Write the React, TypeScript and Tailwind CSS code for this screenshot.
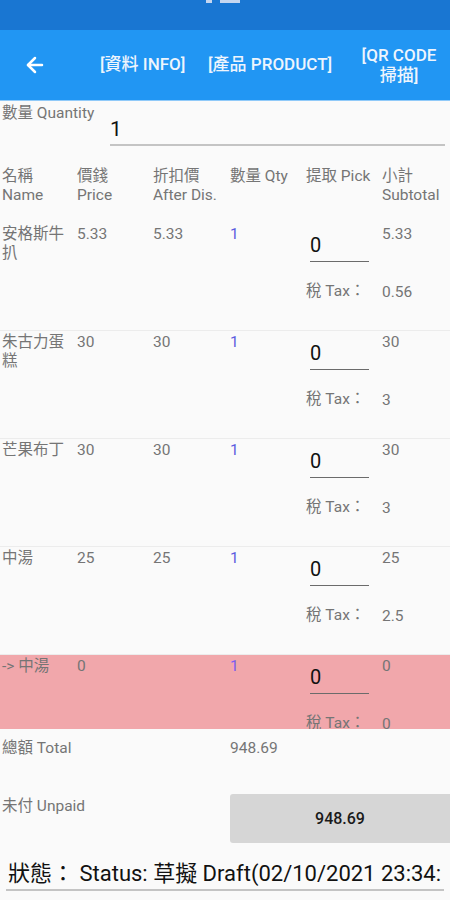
import { ArrowLeft } from 'lucide-react';

const font = { fontFamily: 'Roboto, "Noto Sans CJK TC", sans-serif' };

type Item = {
  name: string;
  price: string;
  after: string;
  qty: string;
  subtotal: string;
  tax: string;
  highlight?: boolean;
};

const items: Item[] = [
  { name: '安格斯牛扒', price: '5.33', after: '5.33', qty: '1', subtotal: '5.33', tax: '0.56' },
  { name: '朱古力蛋糕', price: '30', after: '30', qty: '1', subtotal: '30', tax: '3' },
  { name: '芒果布丁', price: '30', after: '30', qty: '1', subtotal: '30', tax: '3' },
  { name: '中湯', price: '25', after: '25', qty: '1', subtotal: '25', tax: '2.5' },
  { name: '-> 中湯', price: '0', after: '', qty: '1', subtotal: '0', tax: '0', highlight: true },
];

const cols = 'grid grid-cols-[75px_76px_77px_76px_76px_1fr] pl-[2px]';

function ItemRow({ item }: { item: Item }) {
  return (
    <div
      className={`${cols} h-[108px] shrink-0 border-b border-[#ececec] pt-[2px] text-[15.5px] leading-[19px] text-[#757575] ${
        item.highlight ? 'bg-[#f1a7ab]' : ''
      }`}
    >
      <div className="pr-[2px]">{item.name}</div>
      <div>{item.price}</div>
      <div>{item.after}</div>
      <div className={item.highlight ? 'text-[#7c5cf0]' : 'text-[#5c5ce0]'}>{item.qty}</div>
      <div className="flex flex-col">
        <div className="ml-[4px] mt-[7px] w-[59px] border-b-[1.5px] border-[#6b6b6b] pb-[3px] text-[20px] leading-[26px] text-[#111]">
          0
        </div>
        <div className="mt-[20px] whitespace-nowrap text-[#757575]">稅 Tax：</div>
      </div>
      <div className="flex flex-col">
        <div>{item.subtotal}</div>
        <div className="mt-[39px]">{item.tax}</div>
      </div>
    </div>
  );
}

export default function App() {
  return (
    <div className="flex h-[900px] w-[450px] flex-col overflow-hidden bg-[#fafafa]" style={font}>
      {/* Status bar */}
      <div className="relative h-[30px] shrink-0 bg-[#1976d2]">
        <div className="absolute left-[206px] top-0 h-[3px] w-[6px] bg-[#c5d6f0]" />
        <div className="absolute left-[220px] top-0 h-[3px] w-[20px] bg-[#c5d6f0]" />
      </div>

      {/* App bar */}
      <div className="flex h-[70px] shrink-0 items-center bg-[#2196f3] text-[17px] font-medium text-[#eef5fd]">
        <div className="flex w-[100px] pl-[23px]">
          <ArrowLeft size={24} strokeWidth={2.5} color="#ffffff" />
        </div>
        <div className="w-[108px] whitespace-nowrap">[資料 INFO]</div>
        <div className="w-[152px] whitespace-nowrap">[產品 PRODUCT]</div>
        <div className="w-[78px] whitespace-nowrap text-center leading-[20px]">
          [QR CODE
          <br />
          掃描]
        </div>
      </div>
      <div className="h-px shrink-0 bg-[#90caf9]" />

      {/* Quantity */}
      <div className="flex shrink-0 pl-[2px] pt-[3px]">
        <div className="w-[108px] whitespace-nowrap text-[15.5px] leading-[19px] text-[#757575]">數量 Quantity</div>
        <div className="mr-[5px] mt-[12px] flex-1 border-b-2 border-[#c4c4c4] pb-[2px] text-[21px] leading-[26px] text-[#111]">
          1
        </div>
      </div>

      {/* Header */}
      <div className={`${cols} mt-[21px] h-[56px] shrink-0 text-[15.5px] leading-[19px] text-[#757575]`}>
        <div>名稱<br />Name</div>
        <div>價錢<br />Price</div>
        <div className="whitespace-nowrap">折扣價<br />After Dis.</div>
        <div className="whitespace-nowrap">數量 Qty</div>
        <div className="whitespace-nowrap">提取 Pick</div>
        <div>小計<br />Subtotal</div>
      </div>

      {/* Items list */}
      <div className="flex h-[506px] shrink-0 flex-col overflow-hidden">
        {items.map((item) => (
          <ItemRow key={item.name} item={item} />
        ))}
      </div>

      {/* Totals */}
      <div className="flex shrink-0 pl-[2px] pt-[10px] text-[15.5px] leading-[19px] text-[#757575]">
        <div className="w-[228px]">總額 Total</div>
        <div>948.69</div>
      </div>
      <div className="mt-[36px] flex shrink-0 pl-[2px]">
        <div className="w-[228px] pt-[3px] text-[15.5px] leading-[19px] text-[#757575]">未付 Unpaid</div>
        <div className="flex h-[49px] flex-1 items-center justify-center rounded-l-[3px] bg-[#d6d6d6] text-[16px] font-medium text-[#1a1a1a]">
          948.69
        </div>
      </div>

      {/* Status */}
      <div className="mx-[6px] mt-[17px] shrink-0 overflow-hidden whitespace-nowrap border-b-2 border-[#c4c4c4] pb-[1px] pl-[2px] text-[22px] leading-[28px] text-[#111]">
        狀態： Status: 草擬 Draft(02/10/2021 23:34:
      </div>
    </div>
  );
}
